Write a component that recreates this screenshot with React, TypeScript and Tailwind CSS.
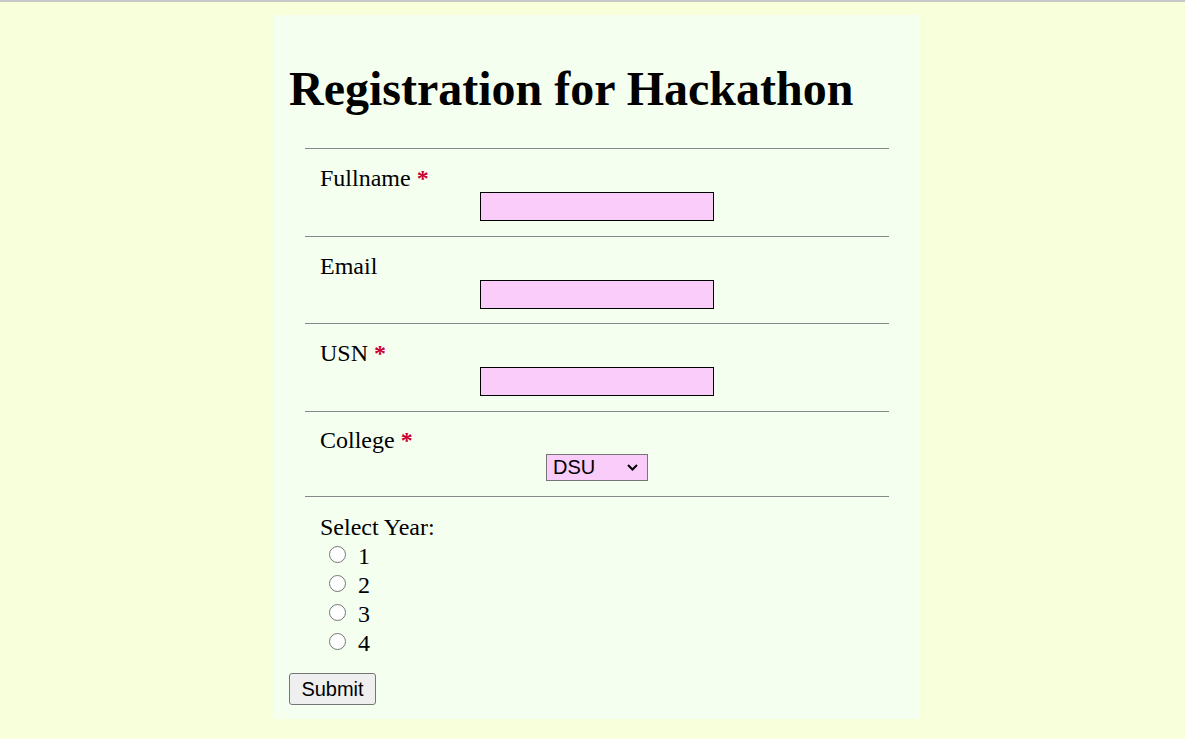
const fields = [
  { label: 'Fullname', required: true, pad: 'pb-[15px]' },
  { label: 'Email', required: false, pad: 'pb-[14px]' },
  { label: 'USN', required: true, pad: 'pb-[15px]' }
];

function Label({ text, required }: { text: string; required: boolean }) {
  return (
    <div className="h-[28px] leading-[28px]">
      {text}
      {required && <span className="font-bold text-[#cc0033]"> *</span>}
    </div>
  );
}

export default function App() {
  return (
    <div className="min-h-screen border-t-2 border-[#c8c8c8] bg-[#f7ffdb] pt-[13px] font-['Liberation_Serif',serif] text-[24px] text-black">
      <div className="ml-[274px] flex h-[704px] w-[645px] flex-col bg-[#f5fff0] pl-[15px] pr-[15px]">
        <h1 className="mt-[46px] h-[55px] text-[48px] font-bold leading-[55px]">
          Registration for Hackathon
        </h1>

        <div className="ml-[16px] mr-[15px] mt-[32px] flex flex-col">
          {fields.map((f) => (
            <div
              key={f.label}
              className={`flex flex-col border-t border-[#888888] pl-[15px] pt-[15px] ${f.pad}`}
            >
              <Label text={f.label} required={f.required} />
              <div className="flex justify-center pr-[15px]">
                <input
                  type="text"
                  className="block h-[29px] w-[234px] border border-black bg-[#f9ccf9] outline-none"
                />
              </div>
            </div>
          ))}

          <div className="flex flex-col border-t border-[#888888] pb-[15px] pl-[15px] pt-[14px]">
            <Label text="College" required={true} />
            <div className="flex justify-center pr-[15px]">
              <div className="relative flex h-[27px] w-[102px] items-center">
                <select className="block h-[27px] w-[102px] appearance-none border border-[#767676] bg-[#f9ccf9] pl-[6px] font-['Liberation_Sans',sans-serif] text-[20px] leading-[25px] text-black outline-none">
                  <option>DSU</option>
                </select>
                <svg
                  className="pointer-events-none absolute right-[10px] top-[10px]"
                  width="11"
                  height="7"
                  viewBox="0 0 11 7"
                >
                  <path d="M1 1l4.5 4.5L10 1" fill="none" stroke="#000" strokeWidth="2" />
                </svg>
              </div>
            </div>
          </div>

          <div className="flex flex-col border-t border-[#888888] pl-[15px] pt-[16px] leading-[29px]">
            <div className="h-[29px]">Select Year:</div>
            {['1', '2', '3', '4'].map((y) => (
              <label key={y} className="flex h-[29px] items-center">
                <span className="ml-[9px] mt-[-4px] box-border h-[17px] w-[17px] rounded-full border-[1.5px] border-[#767676] bg-white" />
                <span className="ml-[12px]">{y}</span>
              </label>
            ))}
          </div>
        </div>

        <div className="mt-[12px]">
          <button className="h-[32px] w-[87px] rounded-[3px] border border-[#767676] bg-[#efefef] font-['Liberation_Sans',sans-serif] text-[20px] leading-none text-black">
            Submit
          </button>
        </div>
      </div>
    </div>
  );
}
